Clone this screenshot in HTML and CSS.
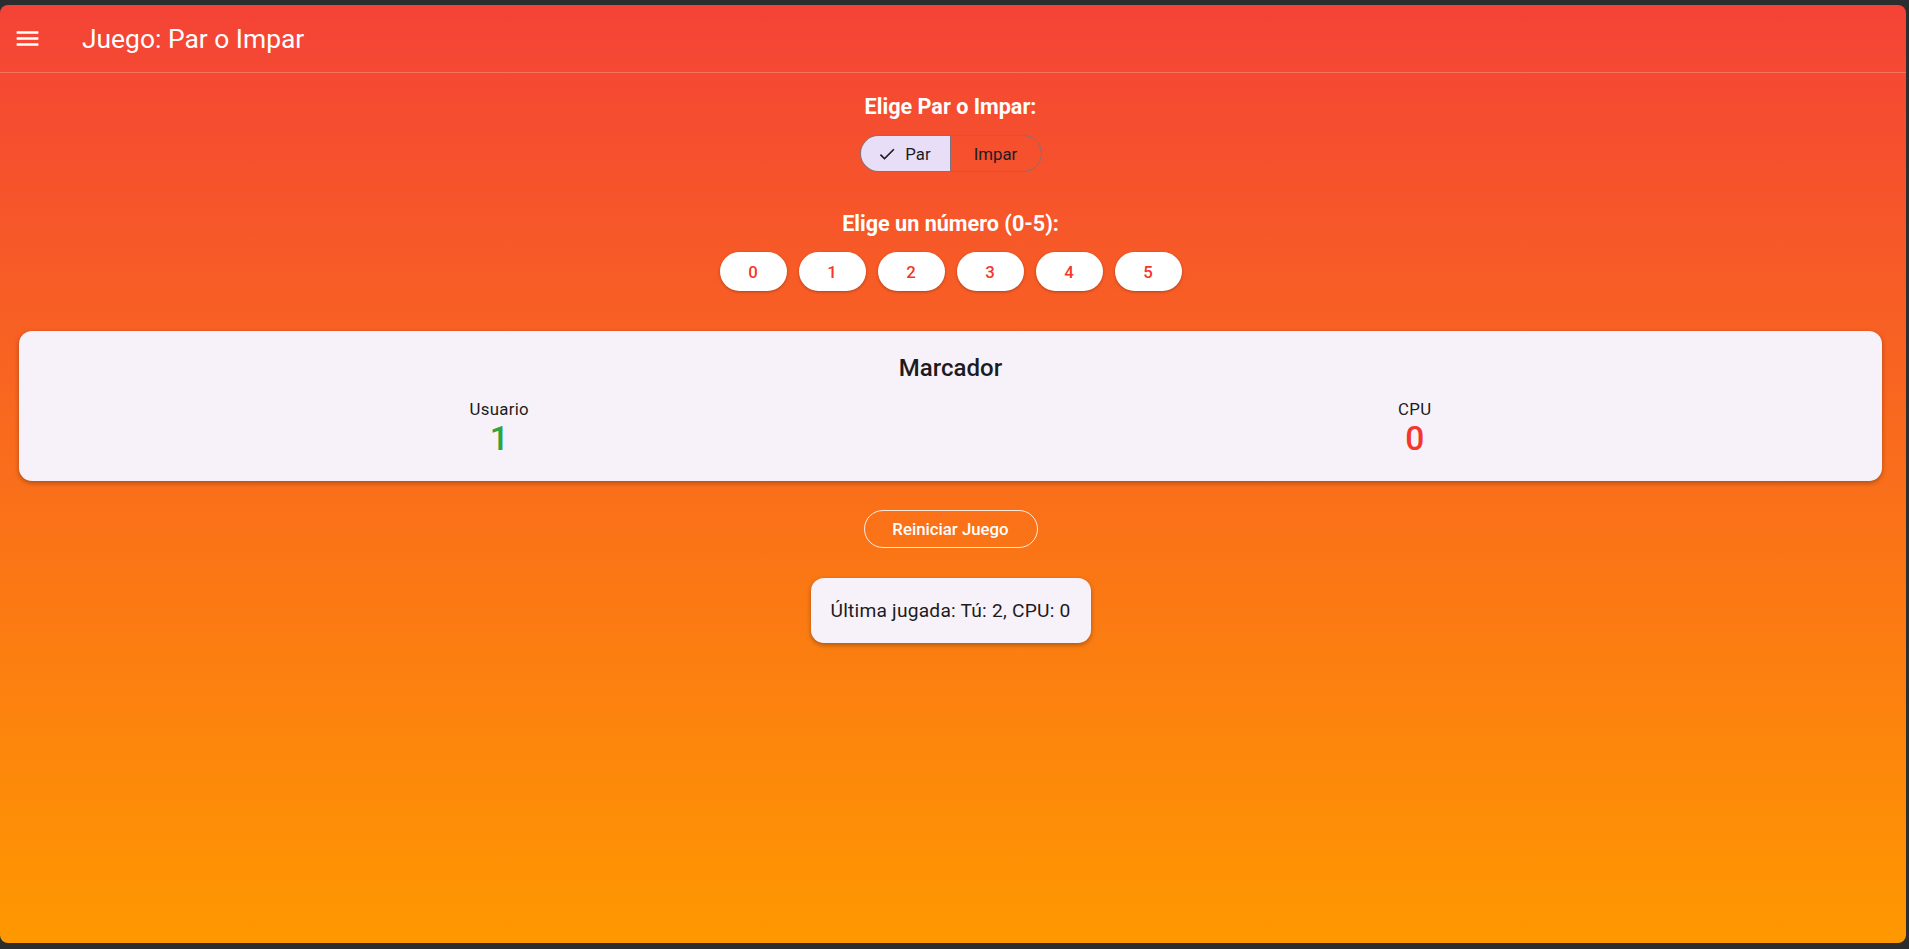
FILE: index.html
```html
<!DOCTYPE html>
<html lang="es">
<head>
<meta charset="utf-8">
<title>Juego: Par o Impar</title>
<link rel="stylesheet" href="styles.css">
</head>
<body>
<div class="desktop">
  <div class="window">
    <header class="appbar">
      <svg class="menu-icon" viewBox="0 0 24 24" aria-hidden="true"><path d="M3 18h18v-2H3v2zm0-5h18v-2H3v2zm0-7v2h18V6H3z" fill="#fff"/></svg>
      <h1 class="title">Juego: Par o Impar</h1>
    </header>
    <main class="content">
      <h2 class="label">Elige Par o Impar:</h2>
      <div class="segmented">
        <button class="seg seg-selected"><svg class="check" viewBox="0 0 24 24" aria-hidden="true"><path d="M9 16.17 4.83 12l-1.42 1.41L9 19 21 7l-1.41-1.41z" fill="#1d1b20"/></svg><span>Par</span></button>
        <button class="seg seg-plain"><span>Impar</span></button>
      </div>
      <h2 class="label label-second">Elige un número (0-5):</h2>
      <div class="numbers">
        <button class="num">0</button>
        <button class="num">1</button>
        <button class="num">2</button>
        <button class="num">3</button>
        <button class="num">4</button>
        <button class="num">5</button>
      </div>
      <section class="card score">
        <h3 class="score-title">Marcador</h3>
        <div class="score-cols">
          <div class="score-col">
            <div class="score-name">Usuario</div>
            <div class="score-val val-user">1</div>
          </div>
          <div class="score-col">
            <div class="score-name">CPU</div>
            <div class="score-val val-cpu">0</div>
          </div>
        </div>
      </section>
      <button class="reset">Reiniciar Juego</button>
      <div class="card last">Última jugada: Tú: 2, CPU: 0</div>
    </main>
  </div>
</div>
</body>
</html>
```

FILE: styles.css
```css
* { box-sizing: border-box; }
html, body { margin: 0; padding: 0; }
body {
  width: 1909px;
  height: 949px;
  overflow: hidden;
  background: #2b2d2f;
  font-family: Roboto, "Noto Sans", "Liberation Sans", sans-serif;
}
.desktop {
  padding: 5px 3px 0 0;
  height: 949px;
}
.window {
  width: 1906px;
  height: 938px;
  border-radius: 8px;
  overflow: hidden;
  background: linear-gradient(to bottom, #f44336 0%, #ff9800 100%);
  display: flex;
  flex-direction: column;
}
.appbar {
  height: 68px;
  flex: 0 0 68px;
  display: flex;
  align-items: center;
  border-bottom: 1px solid rgba(255,255,255,0.22);
  padding-left: 13px;
}
.menu-icon { width: 29px; height: 29px; display: block; }
.title {
  margin: 0 0 0 40px;
  font-size: 26.4px;
  font-weight: 400;
  color: #fff;
  line-height: 32px;
}
.content {
  display: flex;
  flex-direction: column;
  align-items: center;
  padding: 21px 24px 0 19px;
}
.label {
  margin: 0;
  font-size: 21.6px;
  font-weight: 700;
  line-height: 26px;
  color: #fff;
}
.label-second { margin-top: 39px; }
.segmented {
  margin-top: 15px;
  display: flex;
  height: 37px;
  border: 1px solid #79747e;
  border-radius: 19px;
  overflow: hidden;
}
.seg {
  border: 0;
  margin: 0;
  font-family: inherit;
  font-size: 16.8px;
  color: #1d1b20;
  display: flex;
  align-items: center;
  justify-content: center;
  padding: 0;
  height: 100%;
}
.seg-selected {
  width: 90px;
  background: #e8def8;
  border-right: 1px solid #79747e;
  gap: 8px;
  padding-right: 2px;
}
.seg-plain {
  width: 90px;
  background: transparent;
}
.check { width: 20px; height: 20px; display: block; }
.numbers {
  margin-top: 15px;
  display: flex;
  gap: 12px;
}
.num {
  width: 67px;
  height: 39px;
  border: 0;
  border-radius: 20px;
  background: #fff;
  color: #f4362b;
  font-family: inherit;
  font-size: 16.8px;
  font-weight: 500;
  box-shadow: 0 1px 3px rgba(0,0,0,0.28);
  padding: 0;
}
.card {
  background: #f7f2fa;
  border-radius: 13px;
  box-shadow: 0 2px 5px rgba(0,0,0,0.3);
}
.score {
  margin-top: 40px;
  align-self: stretch;
  height: 150px;
  padding: 23px 16px 0;
  display: flex;
  flex-direction: column;
  align-items: stretch;
}
.score-title {
  margin: 0;
  text-align: center;
  font-size: 24px;
  font-weight: 500;
  line-height: 28px;
  color: #1d1b20;
}
.score-cols {
  margin-top: 17px;
  display: flex;
  justify-content: space-around;
}
.score-col {
  display: flex;
  flex-direction: column;
  align-items: center;
}
.score-name {
  font-size: 16.8px;
  line-height: 20px;
  letter-spacing: 0.3px;
  color: #1d1b20;
}
.score-val {
  font-size: 33.6px;
  line-height: 40px;
  font-weight: 500;
}
.val-user { color: #2ea53e; }
.val-cpu { color: #f4362b; }
.reset {
  margin-top: 29px;
  width: 174px;
  height: 38px;
  border: 1px solid rgba(255,255,255,0.85);
  border-radius: 19px;
  background: transparent;
  color: #fff;
  font-family: inherit;
  font-size: 16.8px;
  font-weight: 500;
  padding: 0;
}
.last {
  margin-top: 30px;
  height: 65px;
  padding: 0 20px;
  display: flex;
  align-items: center;
  font-size: 19.2px;
  letter-spacing: 0.22px;
  color: #1d1b20;
}
```
